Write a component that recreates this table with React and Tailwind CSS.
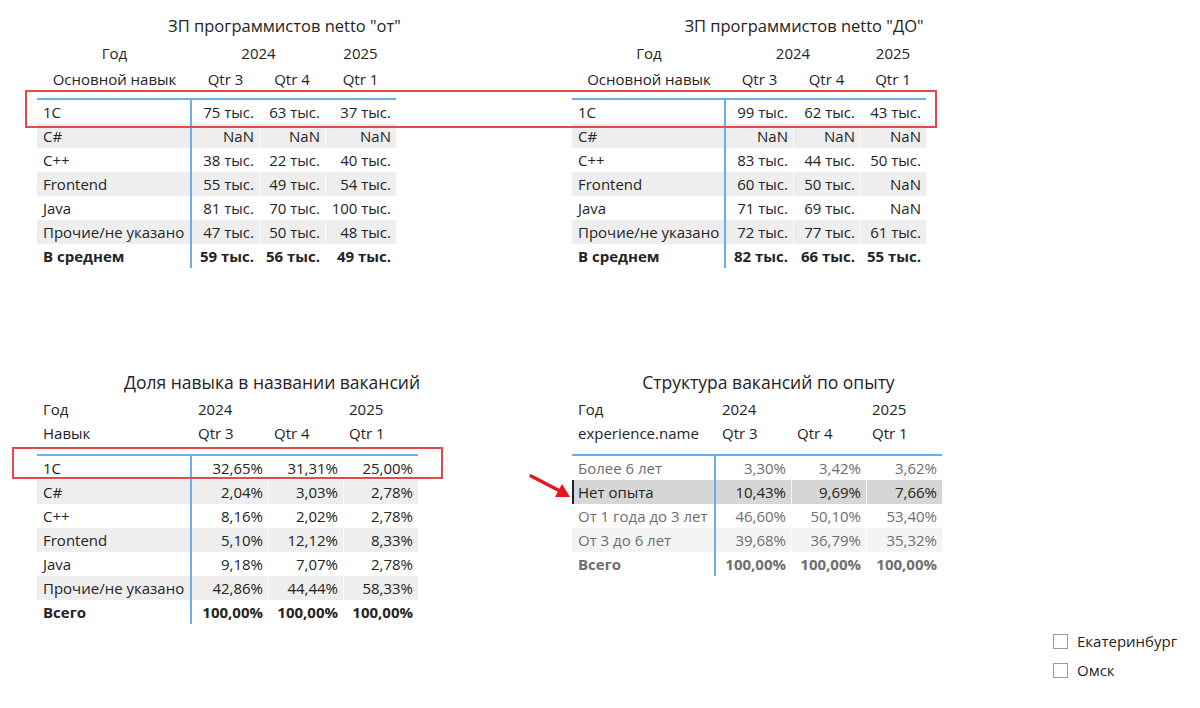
import React from 'react'

const FONT = { fontFamily: '"Open Sans", "Noto Sans", sans-serif' }

const topLeft = [
  ['1C', '75 тыс.', '63 тыс.', '37 тыс.'],
  ['C#', 'NaN', 'NaN', 'NaN'],
  ['C++', '38 тыс.', '22 тыс.', '40 тыс.'],
  ['Frontend', '55 тыс.', '49 тыс.', '54 тыс.'],
  ['Java', '81 тыс.', '70 тыс.', '100 тыс.'],
  ['Прочие/не указано', '47 тыс.', '50 тыс.', '48 тыс.'],
]

const topRight = [
  ['1C', '99 тыс.', '62 тыс.', '43 тыс.'],
  ['C#', 'NaN', 'NaN', 'NaN'],
  ['C++', '83 тыс.', '44 тыс.', '50 тыс.'],
  ['Frontend', '60 тыс.', '50 тыс.', 'NaN'],
  ['Java', '71 тыс.', '69 тыс.', 'NaN'],
  ['Прочие/не указано', '72 тыс.', '77 тыс.', '61 тыс.'],
]

const share = [
  ['1C', '32,65%', '31,31%', '25,00%'],
  ['C#', '2,04%', '3,03%', '2,78%'],
  ['C++', '8,16%', '2,02%', '2,78%'],
  ['Frontend', '5,10%', '12,12%', '8,33%'],
  ['Java', '9,18%', '7,07%', '2,78%'],
  ['Прочие/не указано', '42,86%', '44,44%', '58,33%'],
]

const experience = [
  ['Более 6 лет', '3,30%', '3,42%', '3,62%'],
  ['Нет опыта', '10,43%', '9,69%', '7,66%'],
  ['От 1 года до 3 лет', '46,60%', '50,10%', '53,40%'],
  ['От 3 до 6 лет', '39,68%', '36,79%', '35,32%'],
]

// centered header matrix (top two visuals)
function SalaryTable({ title, titleW, rows, total, widths, yearW, labelW }) {
  return (
    <div>
      <div className={`h-[24px] leading-[24px] text-[16.5px] text-[#252423] text-center whitespace-nowrap ${titleW}`}>
        {title}
      </div>
      <div className="mt-[2px] flex h-[26px] items-center text-[15px] text-[#252423]">
        <div className={`${labelW} text-center`}>Год</div>
        <div className={`${yearW} text-center`}>2024</div>
        <div className={`${widths[2]} text-center`}>2025</div>
      </div>
      <div className="flex h-[26px] items-center text-[15px] text-[#252423]">
        <div className={`${labelW} text-center whitespace-nowrap`}>Основной навык</div>
        <div className={`${widths[0]} text-center`}>Qtr 3</div>
        <div className={`${widths[1]} text-center`}>Qtr 4</div>
        <div className={`${widths[2]} text-center`}>Qtr 1</div>
      </div>
      <Body rows={rows} total={total} widths={widths} labelW={labelW} lineGap="mt-[6px]" />
    </div>
  )
}

function Body({ rows, total, widths, labelW, lineGap, highlight, dim }) {
  return (
    <div className={`${lineGap} border-t-2 border-[#6aaef0] text-[15px]`}>
      {rows.map((r, i) => {
        const hl = highlight === i
        const bg = hl ? 'bg-[#d6d6d6]' : i % 2 === 1 ? (dim ? 'bg-[#f4f4f4]' : 'bg-[#eeeeee]') : 'bg-white'
        const color = dim && !hl ? 'text-[#6e6e6e]' : 'text-[#252423]'
        return (
          <div key={r[0]} className={`flex h-[24px] items-center ${bg} ${color}`}>
            <div className={`${labelW} h-full flex items-center pl-[6px] border-r-2 border-[#6aaef0] whitespace-nowrap ${hl ? 'shadow-[inset_2px_0_0_#252423]' : ''}`}>
              {r[0]}
            </div>
            {r.slice(1).map((v, j) => (
              <div key={j} className={`${widths[j]} h-full flex items-center justify-end pr-[5px] whitespace-nowrap ${j > 0 ? 'border-l border-white/70' : ''}`}>
                {v}
              </div>
            ))}
          </div>
        )
      })}
      <div className={`flex h-[24px] items-center font-bold ${dim ? 'text-[#6e6e6e]' : 'text-[#252423]'}`}>
        <div className={`${labelW} h-full flex items-center pl-[6px] border-r-2 border-[#6aaef0]`}>{total[0]}</div>
        {total.slice(1).map((v, j) => (
          <div key={j} className={`${widths[j]} h-full flex items-center justify-end pr-[5px] whitespace-nowrap`}>
            {v}
          </div>
        ))}
      </div>
    </div>
  )
}

// left aligned header matrix (bottom two visuals)
function ShareTable({ title, titleW, rowHeader, rows, total, widths, labelW, highlight, dim }) {
  return (
    <div>
      <div className={`h-[24px] leading-[24px] text-[17.5px] text-[#252423] text-center whitespace-nowrap ${titleW}`}>
        {title}
      </div>
      <div className="mt-[3px] flex h-[24px] items-center text-[15px] text-[#252423]">
        <div className={`${labelW} pl-[6px]`}>Год</div>
        <div className={`${widths[0]} pl-[6px]`}>2024</div>
        <div className={`${widths[1]}`}></div>
        <div className={`${widths[2]} pl-[6px]`}>2025</div>
      </div>
      <div className="flex h-[24px] items-center text-[15px] text-[#252423]">
        <div className={`${labelW} pl-[6px] whitespace-nowrap`}>{rowHeader}</div>
        <div className={`${widths[0]} pl-[6px]`}>Qtr 3</div>
        <div className={`${widths[1]} pl-[6px]`}>Qtr 4</div>
        <div className={`${widths[2]} pl-[6px]`}>Qtr 1</div>
      </div>
      <Body rows={rows} total={total} widths={widths} labelW={labelW} lineGap="mt-[9px]" highlight={highlight} dim={dim} />
    </div>
  )
}

function Check({ label }) {
  return (
    <div className="flex h-[29px] items-center gap-[9px]">
      <div className="w-[15px] h-[15px] border border-[#9a9a9a] bg-white"></div>
      <span className="text-[15px] text-[#252423]">{label}</span>
    </div>
  )
}

export default function App() {
  return (
    <div className="relative w-[1200px] h-[708px] bg-white overflow-hidden pt-[14px]" style={FONT}>
      {/* top row */}
      <div className="flex pl-[37px] gap-[176px]">
        <div className="w-[359px] shrink-0">
          <SalaryTable
            title={'ЗП программистов netto "от"'}
            titleW="w-[495px]"
            rows={topLeft}
            total={['В среднем', '59 тыс.', '56 тыс.', '49 тыс.']}
            labelW="w-[155px]"
            yearW="w-[133px]"
            widths={['w-[67px]', 'w-[66px]', 'w-[71px]']}
          />
        </div>
        <div className="w-[354px] shrink-0">
          <SalaryTable
            title={'ЗП программистов netto "ДО"'}
            titleW="w-[464px]"
            rows={topRight}
            total={['В среднем', '82 тыс.', '66 тыс.', '55 тыс.']}
            labelW="w-[154px]"
            yearW="w-[134px]"
            widths={['w-[67px]', 'w-[67px]', 'w-[66px]']}
          />
        </div>
      </div>

      {/* bottom row */}
      <div className="mt-[102px] flex pl-[37px] gap-[154px] items-start">
        <div className="w-[381px] shrink-0">
          <ShareTable
            title="Доля навыка в названии вакансий"
            titleW="w-[470px]"
            rowHeader="Навык"
            rows={share}
            total={['Всего', '100,00%', '100,00%', '100,00%']}
            labelW="w-[155px]"
            widths={['w-[76px]', 'w-[75px]', 'w-[75px]']}
          />
        </div>
        <div className="w-[370px] shrink-0">
          <ShareTable
            title="Структура вакансий по опыту"
            titleW="w-[393px]"
            rowHeader="experience.name"
            rows={experience}
            total={['Всего', '100,00%', '100,00%', '100,00%']}
            labelW="w-[144px]"
            widths={['w-[75px]', 'w-[75px]', 'w-[76px]']}
            highlight={1}
            dim
          />
        </div>
      </div>

      {/* slicer */}
      <div className="mt-[3px] ml-[1053px] flex flex-col">
        <Check label="Екатеринбург" />
        <Check label="Омск" />
      </div>

      {/* annotations */}
      <div className="absolute left-[25px] top-[90px] w-[912px] h-[38px] border-2 border-[#e5484d] pointer-events-none"></div>
      <div className="absolute left-[12px] top-[447px] w-[431px] h-[32px] border-2 border-[#e5484d] pointer-events-none"></div>
      <svg className="absolute left-[526px] top-[470px]" width="48" height="32" viewBox="0 0 48 32">
        <line x1="5" y1="6" x2="34" y2="21" stroke="#e8141b" strokeWidth="3.5" strokeLinecap="round" />
        <polygon points="44,27 29,27 36,14" fill="#e8141b" />
      </svg>
    </div>
  )
}
